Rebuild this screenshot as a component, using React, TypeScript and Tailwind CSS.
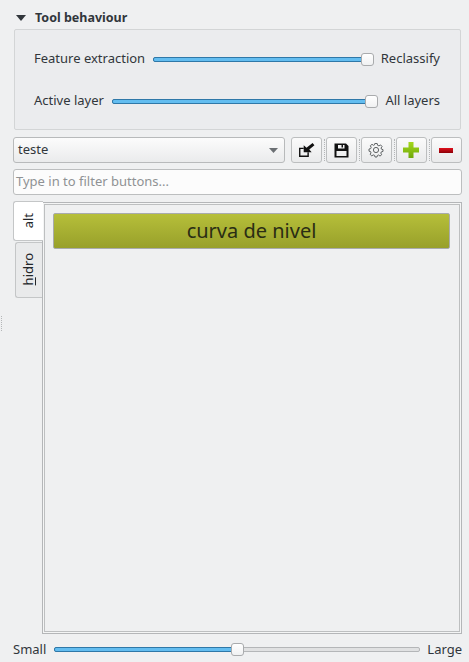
import React from "react";

function Slider({ percent }: { percent: number }) {
  return (
    <div className="relative flex-1 h-[13px] flex items-center">
      <div className="relative w-full h-[5px] rounded-[2px] border border-[#b4b6b8] bg-[#e0e1e2]">
        <div
          className="absolute -left-px -top-px h-[5px] rounded-l-[2px] border border-[#2f78a8] bg-[#63bdf0]"
          style={{ width: `calc(${percent}% + 2px)` }}
        />
      </div>
      <div
        className="absolute top-0 w-[13px] h-[13px] rounded-[3px] border border-[#a9abad] bg-gradient-to-b from-[#ffffff] to-[#f0f1f2]"
        style={{ left: `calc(${percent}% - ${(percent * 13) / 100}px)` }}
      />
    </div>
  );
}

function ToolButton({ children }: { children: React.ReactNode }) {
  return (
    <button className="w-[31px] h-[26px] pr-px rounded-[3px] border border-[#bcbebf] bg-gradient-to-b from-[#fbfbfb] to-[#e9eaeb] flex items-center justify-center">
      {children}
    </button>
  );
}

function Separator() {
  return (
    <div className="w-[4px] h-[26px] flex items-center justify-center">
      <div className="w-px h-[22px] border-l border-dotted border-[#b4b6b8]" />
    </div>
  );
}

export default function App() {
  return (
    <div
      className="relative w-[469px] h-[662px] overflow-hidden bg-[#eff0f1] text-[13px] text-[#31363b] pl-[13px] pr-[7px] flex flex-col"
      style={{ fontFamily: '"Noto Sans", sans-serif' }}
    >
      <div className="h-[29px] flex items-center pl-[3px] pt-[7px] gap-[9px]">
        <svg width="10" height="6" viewBox="0 0 10 6">
          <path d="M0 0H10L5 6Z" fill="#31363b" />
        </svg>
        <span className="font-bold text-[12.5px] leading-none">Tool behaviour</span>
      </div>

      <div className="ml-px mr-px h-[101px] rounded-[2px] border border-[#d3d5d6] bg-[#ebecee] pl-[19px] pr-[20px] pt-[19px]">
        <div className="flex items-center h-[20px] gap-[8px]">
          <span>Feature extraction</span>
          <Slider percent={100} />
          <span className="-ml-px">Reclassify</span>
        </div>
        <div className="flex items-center h-[20px] gap-[8px] mt-[22px]">
          <span>Active layer</span>
          <Slider percent={100} />
          <span className="-ml-px">All layers</span>
        </div>
      </div>

      <div className="flex items-center mt-[7px] h-[26px]">
        <div className="w-[272px] h-[26px] shrink-0 rounded-[3px] border border-[#b8babb] bg-gradient-to-b from-[#fcfcfc] to-[#eaebec] flex items-center justify-between pl-[4px] pr-[6px]">
          <span>teste</span>
          <svg width="9" height="5" viewBox="0 0 9 5">
            <path d="M0 0H9L4.5 5Z" fill="#6b6f73" />
          </svg>
        </div>
        <div className="flex ml-[6px]">
          <ToolButton>
            <svg width="17" height="14" viewBox="0 0 18 15">
              <path d="M1 5H6V6.5H2.5V13.5H10V10H11.5V15H1Z" fill="#111" />
              <path d="M15.5 0L17.5 2.5L12 7L14.5 10H6V2.5L9 5Z" fill="#111" />
            </svg>
          </ToolButton>
          <Separator />
          <ToolButton>
            <svg width="15" height="15" viewBox="0 0 15 15">
              <path
                fillRule="evenodd"
                d="M0.5 0.5H12L14.5 3V14.5H0.5ZM4 2V5.5H10.5V2H9V4.5H7.5V2ZM2.5 8V13H12.5V8Z"
                fill="#111"
              />
            </svg>
          </ToolButton>
          <Separator />
          <ToolButton>
            <svg width="16" height="16" viewBox="0 0 16 16" fill="none" stroke="#5f6365">
              <circle cx="8" cy="8" r="2.6" />
              <path d="M6.8 1.5H9.2L9.6 3.3L11 3.9L12.6 2.9L14.1 4.6L13 6L13.5 7.2L15 7.6V9.4L13.3 9.9L12.8 11.1L13.7 12.7L12 14.1L10.6 13L9.4 13.5L9 15H7L6.6 13.4L5.2 12.9L3.8 13.9L2.1 12.3L3 10.9L2.6 9.6L1 9.2V7L2.7 6.6L3.2 5.3L2.3 3.8L4 2.3L5.4 3.3L6.5 2.9Z" />
            </svg>
          </ToolButton>
          <Separator />
          <ToolButton>
            <svg width="16" height="16" viewBox="0 0 16 16">
              <defs>
                <linearGradient id="plus" x1="0" y1="0" x2="0" y2="1">
                  <stop offset="0" stopColor="#a4d81c" />
                  <stop offset="1" stopColor="#6fa80a" />
                </linearGradient>
              </defs>
              <path d="M5.5 0H10.5V5.5H16V10.5H10.5V16H5.5V10.5H0V5.5H5.5Z" fill="url(#plus)" />
            </svg>
          </ToolButton>
          <Separator />
          <ToolButton>
            <svg width="14" height="5" viewBox="0 0 14 5">
              <defs>
                <linearGradient id="minus" x1="0" y1="0" x2="0" y2="1">
                  <stop offset="0" stopColor="#e0101c" />
                  <stop offset="1" stopColor="#8c0008" />
                </linearGradient>
              </defs>
              <rect width="14" height="5" fill="url(#minus)" />
            </svg>
          </ToolButton>
        </div>
      </div>

      <div className="mt-[6px] h-[26px] rounded-[3px] border border-[#bcbebf] bg-[#fcfcfc] flex items-center pl-[2px] text-[#8f9294]">
        Type in to filter buttons...
      </div>

      <div className="flex mt-[6px] h-[433px]">
        <div className="w-[30px] shrink-0 flex flex-col relative z-10">
          <div className="w-[30px] h-[40px] rounded-l-[3px] border border-r-0 border-[#c4c6c7] bg-white flex items-center justify-center">
            <span className="[writing-mode:vertical-rl] rotate-180 text-[#232629]">alt</span>
          </div>
          <div className="ml-[2px] mt-px w-[27px] h-[56px] pb-[2px] rounded-l-[3px] border border-r-0 border-[#c4c6c7] bg-[#e9eaeb] flex items-center justify-center">
            <span className="[writing-mode:vertical-rl] rotate-180 text-[#232629]">
              <span className="underline">h</span>idro
            </span>
          </div>
        </div>
        <div className="flex-1 -ml-px mt-px border border-[#b4b6b8] p-px bg-[#f4f5f5]">
          <div className="h-full border border-[#bdbfc0] bg-[#eff0f1] pl-[8px] pr-[9px] pt-[8px]">
            <button className="w-full h-[36px] rounded-[2px] border border-[#a9abac] bg-gradient-to-b from-[#b6bf3a] to-[#98a02a] text-[#2a2d14] text-[20px] leading-none flex items-center justify-center">
              curva de nivel
            </button>
          </div>
        </div>
      </div>

      <div className="flex items-center mt-[9px] h-[13px] gap-[8px]">
        <span>Small</span>
        <Slider percent={50} />
        <span className="ml-[-1px]">Large</span>
      </div>

      <div className="absolute left-[1px] top-[316px] w-px h-[15px] border-l border-dotted border-[#b4b6b8]" />
    </div>
  );
}
